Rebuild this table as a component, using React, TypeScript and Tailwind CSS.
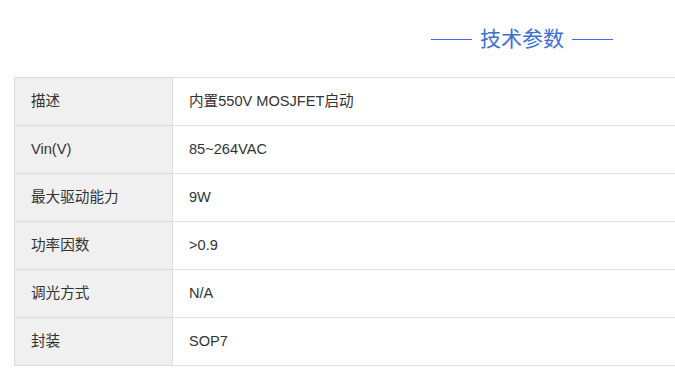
const specs: [string, string][] = [
  ["描述", "内置550V MOSJFET启动"],
  ["Vin(V)", "85~264VAC"],
  ["最大驱动能力", "9W"],
  ["功率因数", ">0.9"],
  ["调光方式", "N/A"],
  ["封装", "SOP7"],
];

export default function App() {
  return (
    <div
      className="w-[675px] h-[379px] overflow-hidden bg-white text-[#333]"
      style={{ fontFamily: '"Liberation Sans", "Noto Sans CJK SC", sans-serif' }}
    >
      <div className="pt-[24px] h-[77px] flex items-start pl-[431px]">
        <h2 className="flex items-center gap-2 text-[21px] leading-[30px] text-[#3b6fd6] font-normal">
          <span className="block w-[41px] h-px bg-[#3b6fd6]" />
          <span>技术参数</span>
          <span className="block w-[41px] h-px bg-[#3b6fd6]" />
        </h2>
      </div>
      <div className="ml-[14px] w-[700px] border-t border-l border-[#dddddd]">
        {specs.map(([label, value]) => (
          <div key={label} className="flex h-[48px] border-b border-[#dddddd] text-[14.6px]">
            <div className="w-[158px] shrink-0 bg-[#f0f0f0] border-r border-[#dddddd] flex items-center pl-4">
              {label}
            </div>
            <div className="flex-1 flex items-center pl-4">{value}</div>
          </div>
        ))}
      </div>
    </div>
  );
}
